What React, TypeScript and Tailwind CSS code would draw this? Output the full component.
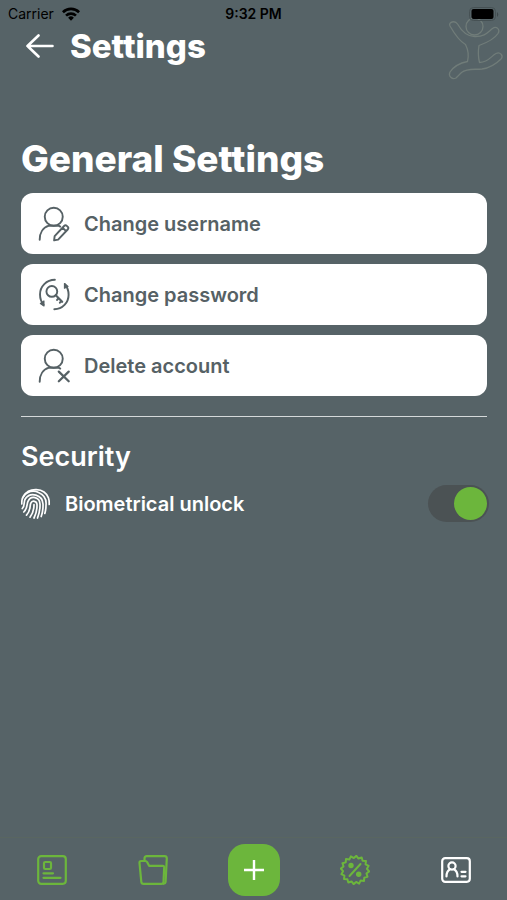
import type { ReactNode } from "react";

const badgePoints = Array.from({ length: 32 }, (_, i) => {
  const angle = ((i + 0.5) * Math.PI) / 16;
  const radius = i % 2 === 0 ? 14.2 : 12;
  return `${(15 + radius * Math.cos(angle)).toFixed(2)},${(15 + radius * Math.sin(angle)).toFixed(2)}`;
}).join(" ");

function Icon({ children, className = "size-8" }: { children: ReactNode; className?: string }) {
  return (
    <svg
      viewBox="0 0 32 32"
      className={className}
      fill="none"
      stroke="currentColor"
      strokeWidth="1.7"
      strokeLinecap="round"
      strokeLinejoin="round"
      aria-hidden="true"
    >
      {children}
    </svg>
  );
}

function EditUserIcon() {
  return (
    <Icon className="size-9">
      <circle cx="14" cy="9.5" r="8" />
      <path d="M1.500 30c0-6 3-11 8.300-12.500h8.500l1.500.8" />
      <path d="M14.800 26.800 23.200 17.800q1.200-1.200 2.400-.1l.8.800q1.200 1.100 0 2.400l-8.500 9-3.600.700zM21.800 19.300l3.200 3" />
    </Icon>
  );
}

function PasswordIcon() {
  return (
    <Icon className="size-9">
      <path d="M15 2.500C7.500 2.500 1.800 8.500 1.800 15.500c0 3.800 1.200 6.800 3.200 9.200" />
      <path d="M5.300 21.300v4.500l-3.200-2.300z" fill="currentColor" strokeWidth="1" />
      <path d="M14.500 28.700c7.300 0 12.700-6 12.700-13 0-3.800-1.200-6.800-3.200-9.200" />
      <path d="M23.500 10V5.800l3.200 2.600z" fill="currentColor" strokeWidth="1" />
      <circle cx="12.300" cy="12.800" r="4.800" />
      <path d="m15.800 16.300 5.700 5.700M18.300 18.800l-1.300 1.500M20.800 21.300l-1.300 1.500" strokeWidth="1.900" />
    </Icon>
  );
}

function DeleteUserIcon() {
  return (
    <Icon className="size-9">
      <circle cx="14" cy="9.500" r="8" />
      <path d="M1.500 30c0-6 3-11 8.300-12.500h8.500l1.500.8" />
      <path d="m18.500 21 8.800 8.500M27.300 21l-8.800 8.500" strokeWidth="2" />
    </Icon>
  );
}

function FingerprintIcon() {
  return (
    <Icon className="size-8 shrink-0">
      <g transform="translate(-1.500 0)">
        <path d="M4 8.500C9-1 25-1 29 10q1 3 .7 6.500" />
        <path d="M2.300 16C1.500 4 13 1.500 19 4.500c6 2.500 8 7.500 7.500 12.500 0 4-.4 6-1.200 8.500" />
        <path d="M2.800 20.500C6 17 3.500 14 6 10.500c5-7 17-4 17.500 5.500.2 5-.5 9-1.800 12.500" />
        <path d="M4.300 24c4-4 2.700-7.500 4.200-10.700 3-6.300 11.700-4.300 12 2.700.2 5-.8 9.500-2.500 14" />
        <path d="M7 27.200c4.500-4.700 3-9 4.300-12 1.500-3.300 6-2.200 6.200 1.300.2 5-1 9.500-3 13.500" />
        <path d="M10.500 29.200c3.500-4.500 4-8.200 4-12.500" />
      </g>
    </Icon>
  );
}

function SettingsRow({ icon, label }: { icon: ReactNode; label: string }) {
  return (
    <button
      type="button"
      className="flex h-[61px] w-full items-center gap-2 rounded-xl bg-white pl-[17px] pr-5 text-left text-xl font-semibold text-[#566165]"
    >
      <span className="w-[38px] shrink-0">{icon}</span>
      {label}
    </button>
  );
}

function StatusBar() {
  return (
    <div className="grid h-7 grid-cols-3 items-center px-2 text-sm text-black">
      <div className="flex items-center gap-2">
        <span>Carrier</span>
        <svg viewBox="0 0 20 15" className="h-[14px] w-[18px]" aria-hidden="true">
          <g fill="none" stroke="currentColor" strokeWidth="3">
            <path d="M1 5.500a13 13 0 0 1 18 0" />
            <path d="M4.500 9.300a8 8 0 0 1 11 0" />
          </g>
          <path d="M6.800 11.600a4.700 4.700 0 0 1 6.400 0L10 15z" fill="currentColor" />
        </svg>
      </div>
      <span className="text-center font-semibold">9:32 PM</span>
      <svg viewBox="0 0 31 15" className="h-[15px] w-[31px] justify-self-end" aria-hidden="true">
        <rect x="1.500" y=".5" width="26" height="13" rx="4" fill="none" stroke="#465154" />
        <rect x="3.500" y="2" width="22" height="10" rx="2" fill="currentColor" />
        <path d="M29 5q2.500 2.500 0 5z" fill="#3e484b" />
      </svg>
    </div>
  );
}

function JumpingFigure() {
  return (
    <svg
      viewBox="0 0 58 64"
      className="absolute right-[2px] top-[17px] h-16 w-[58px]"
      fill="none"
      stroke="#707c79"
      strokeWidth="1.300"
      strokeLinejoin="round"
      aria-hidden="true"
    >
      <circle cx="27.500" cy="9.500" r="8.500" />
      <path d="M3 9C1 5 8 3 10.500 7c4 7 9 13 18 12.500 9 0 11-3 17-8 4-3 8 1 5.500 5C47 22.500 39 26 32 28.500c-1 6-1 11 .5 17C42 45 44 39 49 36.500c4-2 8 2 5 5.500-5 5-11 9-19 10-8 .8-15-1-20.500 3.500L9 61c-4 2-8-2-6-6 4-6 10-9 17.500-10.500 1.500-6 1-11-2-17C12 24 7 16 3 9Z" />
    </svg>
  );
}

function NavLink({ label, children, active = false }: { label: string; children: ReactNode; active?: boolean }) {
  return (
    <a
      href="#"
      aria-label={label}
      aria-current={active ? "page" : undefined}
      className={active ? "text-white" : "text-[#6cb63c]"}
    >
      {children}
    </a>
  );
}

function BottomNav() {
  return (
    <nav className="grid h-[63px] grid-cols-5 place-items-center border-t border-[#596661] pl-px pt-0.5">
      <NavLink label="News">
        <svg viewBox="0 0 30 30" className="size-[30px]" fill="none" stroke="currentColor" strokeWidth="2.200" strokeLinejoin="round">
          <rect x="1.200" y="1.200" width="27.600" height="27.600" rx="3" />
          <rect x="7" y="7" width="7" height="7" rx="1.200" />
          <path d="M6.500 18.300h9.500M6.500 22.800h17" strokeLinecap="round" />
        </svg>
      </NavLink>
      <NavLink label="Documents">
        <svg viewBox="0 0 30 30" className="size-[30px]" fill="none" stroke="currentColor" strokeWidth="2.200" strokeLinejoin="round">
          <path d="M1.500 8q-.2-2 1.800-2h4.200q1 0 1.600 1l2 3.800h13.500q1.700 0 1.600 1.700L25.500 27q0 1.800-2 1.800H5.500q-2 0-2.200-2z" />
          <path d="M6.500 5.500V3.500q0-2.300 2.300-2.300H26.500q2.300 0 2.300 2.300l-1.200 23.300q-.1 2-2.600 2" />
        </svg>
      </NavLink>
      <button type="button" aria-label="Add" className="flex size-13 items-center justify-center rounded-[17px] bg-[#6cb63c] text-white">
        <svg viewBox="0 0 20 20" className="size-5" stroke="currentColor" strokeWidth="2.400">
          <path d="M10 0v20M0 10h20" />
        </svg>
      </button>
      <NavLink label="Offers">
        <svg viewBox="0 0 30 30" className="size-[30px]" fill="none" stroke="currentColor" strokeWidth="2" strokeLinejoin="round">
          <polygon points={badgePoints} />
          <path d="M20.500 9 9.500 21" strokeLinecap="round" />
          <circle cx="11" cy="10.500" r="2.700" fill="currentColor" stroke="none" />
          <circle cx="18.700" cy="19.300" r="2.700" fill="currentColor" stroke="none" />
        </svg>
      </NavLink>
      <NavLink label="Profile" active>
        <svg viewBox="0 0 30 26" className="h-[26px] w-[30px]" fill="none" stroke="currentColor" strokeWidth="2.200" strokeLinecap="round" strokeLinejoin="round">
          <rect x="1.200" y="1.200" width="27.600" height="23.600" rx="3" />
          <circle cx="11" cy="9" r="3.600" />
          <path d="M5.500 19.500c0-4 1.500-6.200 3.700-7.200M16.500 19.500c0-4-1.500-6.200-3.700-7.200M20.500 14.800h4M20.500 19.300h4" />
        </svg>
      </NavLink>
    </nav>
  );
}

export default function App() {
  return (
    <div className="relative flex min-h-screen flex-col bg-[#566367] font-['Inter',sans-serif] text-white">
      <JumpingFigure />
      <div className="relative">
        <StatusBar />
      </div>
      <header className="flex h-9 items-center gap-4 pl-[26px]">
        <button type="button" aria-label="Back">
          <svg viewBox="0 0 28 24" className="h-6 w-7" fill="none" stroke="currentColor" strokeWidth="2.600" strokeLinecap="round" strokeLinejoin="round">
            <path d="M26.500 12H1.500M12.500 1.500 1.500 12l11 10.500" />
          </svg>
        </button>
        <h1 className="text-[33px] leading-10 font-extrabold">Settings</h1>
      </header>

      <main className="flex-1 pl-[21px] pr-5 pt-[71px]">
        <h2 className="text-[37px] leading-12 font-extrabold">General Settings</h2>
        <div className="mt-2.5 flex flex-col gap-2.5">
          <SettingsRow icon={<EditUserIcon />} label="Change username" />
          <SettingsRow icon={<PasswordIcon />} label="Change password" />
          <SettingsRow icon={<DeleteUserIcon />} label="Delete account" />
        </div>
        <hr className="mt-5 border-[#d5d9da]" />
        <h3 className="mt-5 text-[27px] leading-10 font-semibold">Security</h3>
        <div className="-mr-0.5 mt-2 flex items-center gap-3">
          <FingerprintIcon />
          <label htmlFor="biometrical-unlock" className="flex-1 text-xl font-semibold">
            Biometrical unlock
          </label>
          <input
            id="biometrical-unlock"
            type="checkbox"
            role="switch"
            defaultChecked
            className="flex h-[37px] w-[61px] appearance-none items-center rounded-full bg-[#4b5254] px-0.5 before:size-[33px] before:rounded-full before:bg-[#aeb5b7] checked:justify-end checked:before:bg-[#6cb63c]"
          />
        </div>
      </main>

      <BottomNav />
    </div>
  );
}
